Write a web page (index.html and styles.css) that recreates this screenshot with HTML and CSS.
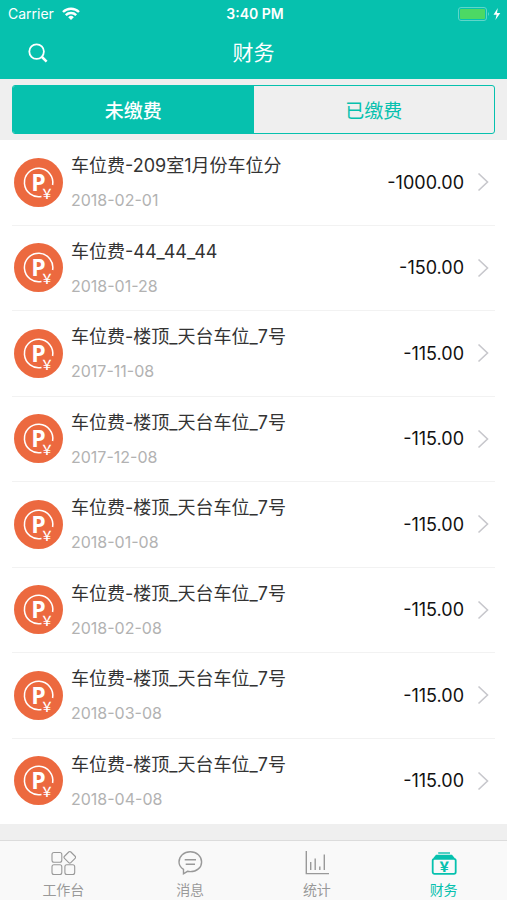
FILE: index.html
```html
<!DOCTYPE html>
<html lang="zh-CN">
<head>
    <meta charset="UTF-8">
    <meta name="viewport" content="width=device-width, initial-scale=1.0">
    <title>财务</title>
    <link rel="stylesheet" href="styles.css">
</head>
<body>
    <svg class="sprite" aria-hidden="true">
        <symbol id="icon-parking" viewBox="0 0 49 49">
            <circle cx="24.5" cy="24.5" r="24.5" fill="#ec693f"/>
            <path d="M38.6 27A14.2 14.2 0 1 0 27.5 38.4" fill="none" stroke="#fff" stroke-width="1.5"/>
            <text x="24.5" y="32.5" text-anchor="middle" font-size="23" font-weight="700" font-family="Open Sans, sans-serif" fill="#fff">P</text>
            <text x="33" y="40" text-anchor="middle" font-size="13" font-weight="500" font-family="Noto Sans CJK SC, sans-serif" fill="#fff">￥</text>
        </symbol>
        <symbol id="icon-arrow" viewBox="0 0 12 20">
            <path d="M1.5 1.5L10.5 10L1.5 18.5" fill="none" stroke="#c7c7cc" stroke-width="1.6"/>
        </symbol>
    </svg>

    <header class="header">
        <div class="status-bar">
            <div class="carrier">
                <span>Carrier</span>
                <svg width="18" height="14" viewBox="0 0 18 14" fill="none" stroke="#fff" stroke-width="2.4">
                    <path d="M1 5A11.4 11.4 0 0 1 17 5"/>
                    <path d="M3.8 8.2A7.4 7.4 0 0 1 14.2 8.2"/>
                    <path d="M9 13L6.2 10.2A4 4 0 0 1 11.8 10.2Z" fill="#fff" stroke="none"/>
                </svg>
            </div>
            <div class="time">3:40 PM</div>
            <div class="battery">
                <svg width="44" height="14" viewBox="0 0 44 14">
                    <rect x="0.5" y="0.5" width="28" height="13" rx="2.5" fill="none" stroke="#5fd6ca"/>
                    <rect x="2" y="2" width="25" height="10" rx="1" fill="#4cd964"/>
                    <path d="M30 5Q32 7 30 9Z" fill="#5fd6ca"/>
                    <path d="M39.8 1L35.5 7.8H38.6L37.4 13L42.3 5.9H39Z" fill="#fff"/>
                </svg>
            </div>
        </div>
        <div class="nav-bar">
            <button type="button" class="search-btn" aria-label="搜索">
                <svg width="20" height="20" viewBox="0 0 20 20" fill="none" stroke="#fff">
                    <circle cx="8.6" cy="8.6" r="7.3" stroke-width="1.8"/>
                    <path d="M14 14L18.6 18.6" stroke-width="2.5"/>
                </svg>
            </button>
            <h1>财务</h1>
        </div>
    </header>

    <div class="segment">
        <button type="button" class="segment-btn active">未缴费</button>
        <button type="button" class="segment-btn">已缴费</button>
    </div>

    <main class="bill-list">
        <a href="#" class="bill">
            <svg class="bill-icon"><use href="#icon-parking"/></svg>
            <div class="bill-info">
                <div class="bill-title">车位费-209室1月份车位分</div>
                <div class="bill-date">2018-02-01</div>
            </div>
            <div class="bill-amount">-1000.00</div>
            <svg class="bill-arrow"><use href="#icon-arrow"/></svg>
        </a>
        <a href="#" class="bill">
            <svg class="bill-icon"><use href="#icon-parking"/></svg>
            <div class="bill-info">
                <div class="bill-title">车位费-44_44_44</div>
                <div class="bill-date">2018-01-28</div>
            </div>
            <div class="bill-amount">-150.00</div>
            <svg class="bill-arrow"><use href="#icon-arrow"/></svg>
        </a>
        <a href="#" class="bill">
            <svg class="bill-icon"><use href="#icon-parking"/></svg>
            <div class="bill-info">
                <div class="bill-title">车位费-楼顶_天台车位_7号</div>
                <div class="bill-date">2017-11-08</div>
            </div>
            <div class="bill-amount">-115.00</div>
            <svg class="bill-arrow"><use href="#icon-arrow"/></svg>
        </a>
        <a href="#" class="bill">
            <svg class="bill-icon"><use href="#icon-parking"/></svg>
            <div class="bill-info">
                <div class="bill-title">车位费-楼顶_天台车位_7号</div>
                <div class="bill-date">2017-12-08</div>
            </div>
            <div class="bill-amount">-115.00</div>
            <svg class="bill-arrow"><use href="#icon-arrow"/></svg>
        </a>
        <a href="#" class="bill">
            <svg class="bill-icon"><use href="#icon-parking"/></svg>
            <div class="bill-info">
                <div class="bill-title">车位费-楼顶_天台车位_7号</div>
                <div class="bill-date">2018-01-08</div>
            </div>
            <div class="bill-amount">-115.00</div>
            <svg class="bill-arrow"><use href="#icon-arrow"/></svg>
        </a>
        <a href="#" class="bill">
            <svg class="bill-icon"><use href="#icon-parking"/></svg>
            <div class="bill-info">
                <div class="bill-title">车位费-楼顶_天台车位_7号</div>
                <div class="bill-date">2018-02-08</div>
            </div>
            <div class="bill-amount">-115.00</div>
            <svg class="bill-arrow"><use href="#icon-arrow"/></svg>
        </a>
        <a href="#" class="bill">
            <svg class="bill-icon"><use href="#icon-parking"/></svg>
            <div class="bill-info">
                <div class="bill-title">车位费-楼顶_天台车位_7号</div>
                <div class="bill-date">2018-03-08</div>
            </div>
            <div class="bill-amount">-115.00</div>
            <svg class="bill-arrow"><use href="#icon-arrow"/></svg>
        </a>
        <a href="#" class="bill">
            <svg class="bill-icon"><use href="#icon-parking"/></svg>
            <div class="bill-info">
                <div class="bill-title">车位费-楼顶_天台车位_7号</div>
                <div class="bill-date">2018-04-08</div>
            </div>
            <div class="bill-amount">-115.00</div>
            <svg class="bill-arrow"><use href="#icon-arrow"/></svg>
        </a>
    </main>

    <nav class="tab-bar">
        <a href="#" class="tab">
            <svg width="26" height="26" viewBox="0 0 26 26" fill="none" stroke="currentColor" stroke-width="1.1">
                <rect x="2" y="2.5" width="9.8" height="9.8" rx="2"/>
                <rect x="2" y="14.7" width="9.8" height="9.8" rx="2"/>
                <rect x="14.9" y="14.7" width="9.8" height="9.8" rx="2"/>
                <rect x="15.3" y="2.8" width="9" height="9" rx="1.5" transform="rotate(45 19.8 7.3)"/>
            </svg>
            <span>工作台</span>
        </a>
        <a href="#" class="tab">
            <svg width="26" height="26" viewBox="0 0 26 26" fill="none" stroke="currentColor" stroke-width="1.4">
                <path d="M6.5 19.4C3.6 17.4 2 14.8 2 11.9C2 6.2 6.8 1.7 13.3 1.7S24.6 6.2 24.6 11.9S19.8 21.6 13.3 21.6C12.3 21.6 11.4 21.5 10.5 21.3L6.5 23.8Z"/>
                <path d="M7.7 9.8H19M8.7 14.2H18"/>
            </svg>
            <span>消息</span>
        </a>
        <a href="#" class="tab">
            <svg width="26" height="26" viewBox="0 0 26 26" fill="none" stroke="currentColor" stroke-width="1.4">
                <path d="M2.3 1V23.6H25"/>
                <path d="M6.7 12V20M11.2 8.5V20M15.8 16.5V20M20.3 4.5V20"/>
            </svg>
            <span>统计</span>
        </a>
        <a href="#" class="tab active">
            <svg width="26" height="26" viewBox="0 0 26 26" fill="none" stroke="currentColor">
                <path d="M7.2 3H19" stroke-width="1.4"/>
                <path d="M5 4.8H21L24 8.6H2Z" fill="currentColor" stroke="none"/>
                <rect x="1.7" y="8.8" width="23" height="15" rx="1.8" stroke-width="1.8"/>
                <text x="13.2" y="21" text-anchor="middle" font-size="13" font-weight="900" font-family="Noto Sans CJK SC, sans-serif" fill="currentColor" stroke="none">￥</text>
            </svg>
            <span>财务</span>
        </a>
    </nav>
</body>
</html>
```
FILE: styles.css
```css
* {
    box-sizing: border-box;
}

body {
    font-family: Inter, 'Noto Sans CJK SC', sans-serif;
    background: #efefef;
    margin: 0;
    min-height: 100vh;
    display: flex;
    flex-direction: column;
    color: #333;
}

svg {
    display: block;
    flex-shrink: 0;
}

button {
    font-family: inherit;
    border: none;
    background: none;
    padding: 0;
    cursor: pointer;
}

a {
    color: inherit;
    text-decoration: none;
}

.sprite {
    display: none;
}

.header {
    background: #06c1ae;
    color: #fff;
}

.status-bar {
    display: grid;
    grid-template-columns: 1fr auto 1fr;
    align-items: center;
    height: 27px;
    padding: 0 5px 0 8px;
    font-size: 14px;
}

.carrier {
    display: flex;
    align-items: center;
    gap: 8px;
}

.time {
    font-weight: 600;
}

.battery {
    display: flex;
    justify-content: flex-end;
}

.nav-bar {
    display: grid;
    grid-template-columns: 48px 1fr 48px;
    align-items: center;
    height: 52px;
}

.search-btn {
    justify-self: end;
}

h1 {
    margin: 0;
    font-size: 21px;
    line-height: 32px;
    font-weight: 400;
    text-align: center;
}

.segment {
    display: flex;
    height: 49px;
    margin: 6px 12px;
    border: 1px solid #06c1ae;
    border-radius: 3px;
    overflow: hidden;
}

.segment-btn {
    flex: 1;
    font-size: 19px;
    color: #06c1ae;
}

.segment-btn.active {
    background: #06c1ae;
    color: #fff;
    font-weight: 500;
}

.bill-list {
    flex: 1;
    display: flex;
    flex-direction: column;
    margin-bottom: 16px;
    padding: 0 12px;
    background: #fff;
}

.bill {
    flex: 1;
    display: flex;
    align-items: center;
    padding: 8px 6px 8px 2px;
    border-bottom: 1px solid #f2f2f2;
}

.bill:last-child {
    border-bottom-color: transparent;
}

.bill-icon {
    width: 49px;
    height: 49px;
    margin-right: 8px;
}

.bill-info {
    flex: 1;
}

.bill-title {
    font-size: 18px;
    line-height: 28px;
    margin-bottom: 8px;
}

.bill-date {
    font-size: 16px;
    line-height: 24px;
    color: #b2b2b2;
}

.bill-amount {
    font-size: 18px;
    color: #111;
}

.bill-arrow {
    width: 12px;
    height: 20px;
    margin-left: 13px;
}

.tab-bar {
    display: flex;
    height: 60px;
    background: #f9f9f9;
    border-top: 1px solid #dcdcdc;
}

.tab {
    flex: 1;
    display: flex;
    flex-direction: column;
    align-items: center;
    padding-top: 9px;
    font-size: 14px;
    line-height: 20px;
    color: #999;
}

.tab span {
    margin-top: 4px;
}

.tab.active {
    color: #06c1ae;
}
```
